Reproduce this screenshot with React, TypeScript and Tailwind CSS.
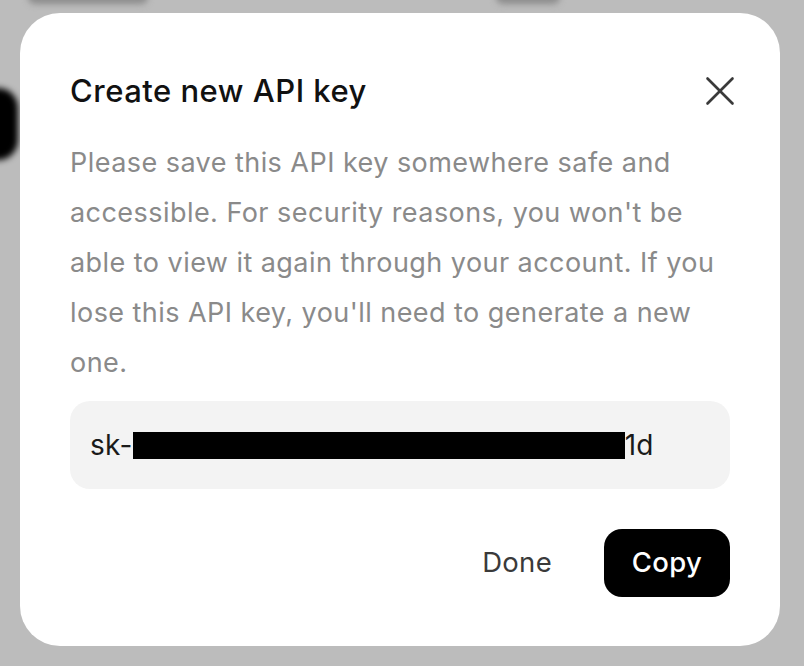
import { X } from "lucide-react";

export default function App() {
    return (
        <div
            className="relative w-[804px] h-[666px] overflow-hidden bg-[#bcbcbc]"
            style={{ fontFamily: "Inter, 'Noto Sans', sans-serif" }}
        >
            {/* blurred page behind the overlay */}
            <div className="absolute left-[28px] top-[-10px] w-[120px] h-[14px] rounded-full bg-[#8c8c8c] blur-[3px]" />
            <div className="absolute left-[496px] top-[-10px] w-[64px] h-[14px] rounded-full bg-[#8c8c8c] blur-[3px]" />
            <div className="absolute left-[-30px] top-[88px] w-[48px] h-[72px] rounded-[20px] bg-black blur-[3px]" />

            <div className="relative ml-[20px] mt-[13px] w-[760px] h-[633px] bg-white rounded-[40px] px-[50px] pt-[60px] flex flex-col">
                <div className="flex items-center justify-between h-[36px]">
                    <h2 className="text-[31px] font-medium text-[#111111] tracking-[0.5px]">Create new API key</h2>
                    <button className="mr-[-15px] text-[#3a3a3a]">
                        <X size={50} strokeWidth={1.25} />
                    </button>
                </div>

                <p className="mt-[29px] text-[27px] leading-[50px] tracking-[0.45px] text-[#8a8a8a]">
                    Please save this API key somewhere safe and accessible. For security reasons, you won't be able to view it again through your account. If you lose this API key, you'll need to generate a new one.
                </p>

                <div className="mt-[13px] h-[88px] rounded-[20px] bg-[#f3f3f3] px-[20px] flex items-center text-[28px] tracking-[0.3px] text-[#1a1a1a]">
                    <span>sk-</span>
                    <span className="inline-block w-[492px] h-[27px] bg-black" />
                    <span>1d</span>
                </div>

                <div className="mt-[40px] flex items-center justify-end gap-[52px]">
                    <button className="text-[27.5px] tracking-[0.3px] text-[#3a3a3a]">Done</button>
                    <button className="h-[68px] w-[126px] rounded-[18px] bg-black text-white text-[27.5px] tracking-[0.3px] font-medium">Copy</button>
                </div>
            </div>
        </div>
    );
}
